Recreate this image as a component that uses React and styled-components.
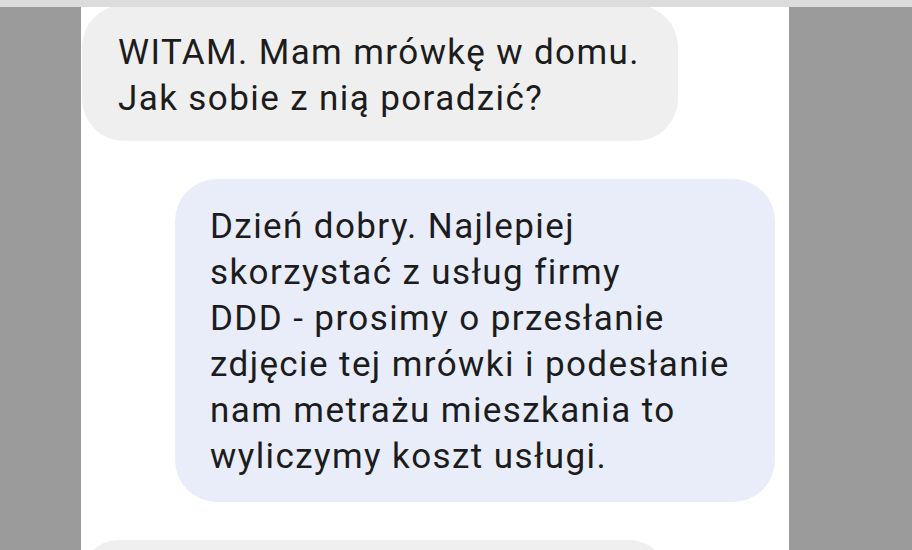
import React from 'react';
import styled, { createGlobalStyle } from 'styled-components';

// chat screenshot: two incoming/outgoing bubbles on a white column

const Global = createGlobalStyle`
  html, body {
    margin: 0;
    padding: 0;
    background: #9b9b9b;
    overflow: hidden;
  }
`;

const Page = styled.div`
  height: 550px;
  display: flex;
  flex-direction: column;
`;

const TopBar = styled.div`
  height: 7px;
  background: #dcdcdc;
  position: relative;
  z-index: 1;
  flex-shrink: 0;
`;

const Column = styled.div`
  margin-left: 81px;
  width: 708px;
  flex: 1;
  background: #ffffff;
  display: flex;
  flex-direction: column;
  gap: 38px;
  overflow: hidden;
`;

const Bubble = styled.div`
  box-sizing: border-box;
  width: ${(p) => p.width}px;
  align-self: ${(p) => (p.mine ? 'flex-end' : 'flex-start')};
  margin: ${(p) => (p.mine ? '0 14px 0 0' : '0 0 0 1px')};
  margin-top: ${(p) => p.top || 0}px;
  padding: ${(p) => p.pad};
  border-radius: 42px;
  background: ${(p) => (p.mine ? '#e8edf9' : '#efefef')};
  color: #1c1c1c;
  font-family: Roboto, 'Noto Sans', sans-serif;
  font-size: 35px;
  letter-spacing: 1.4px;
  line-height: 46px;
  flex-shrink: 0;
`;

const Line = styled.div`
  white-space: nowrap;
`;

function Message({ lines, ...rest }) {
  return (
    <Bubble {...rest}>
      {lines.map((l) => (
        <Line key={l}>{l}</Line>
      ))}
    </Bubble>
  );
}

export default function App() {
  return (
    <Page>
      <Global />
      <TopBar />
      <Column>
        <Message
          width={596}
          top={-2}
          pad="25px 30px 19px 36px"
          lines={['WITAM. Mam mrówkę w domu.', 'Jak sobie z nią poradzić?']}
        />
        <Message
          mine
          width={600}
          pad="25px 20px 22px 35px"
          lines={[
            'Dzień dobry. Najlepiej',
            'skorzystać z usług firmy',
            'DDD - prosimy o przesłanie',
            'zdjęcie tej mrówki i podesłanie',
            'nam metrażu mieszkania to',
            'wyliczymy koszt usługi.',
          ]}
        />
        <Message width={584} pad="36px" lines={['']} />
      </Column>
    </Page>
  );
}
